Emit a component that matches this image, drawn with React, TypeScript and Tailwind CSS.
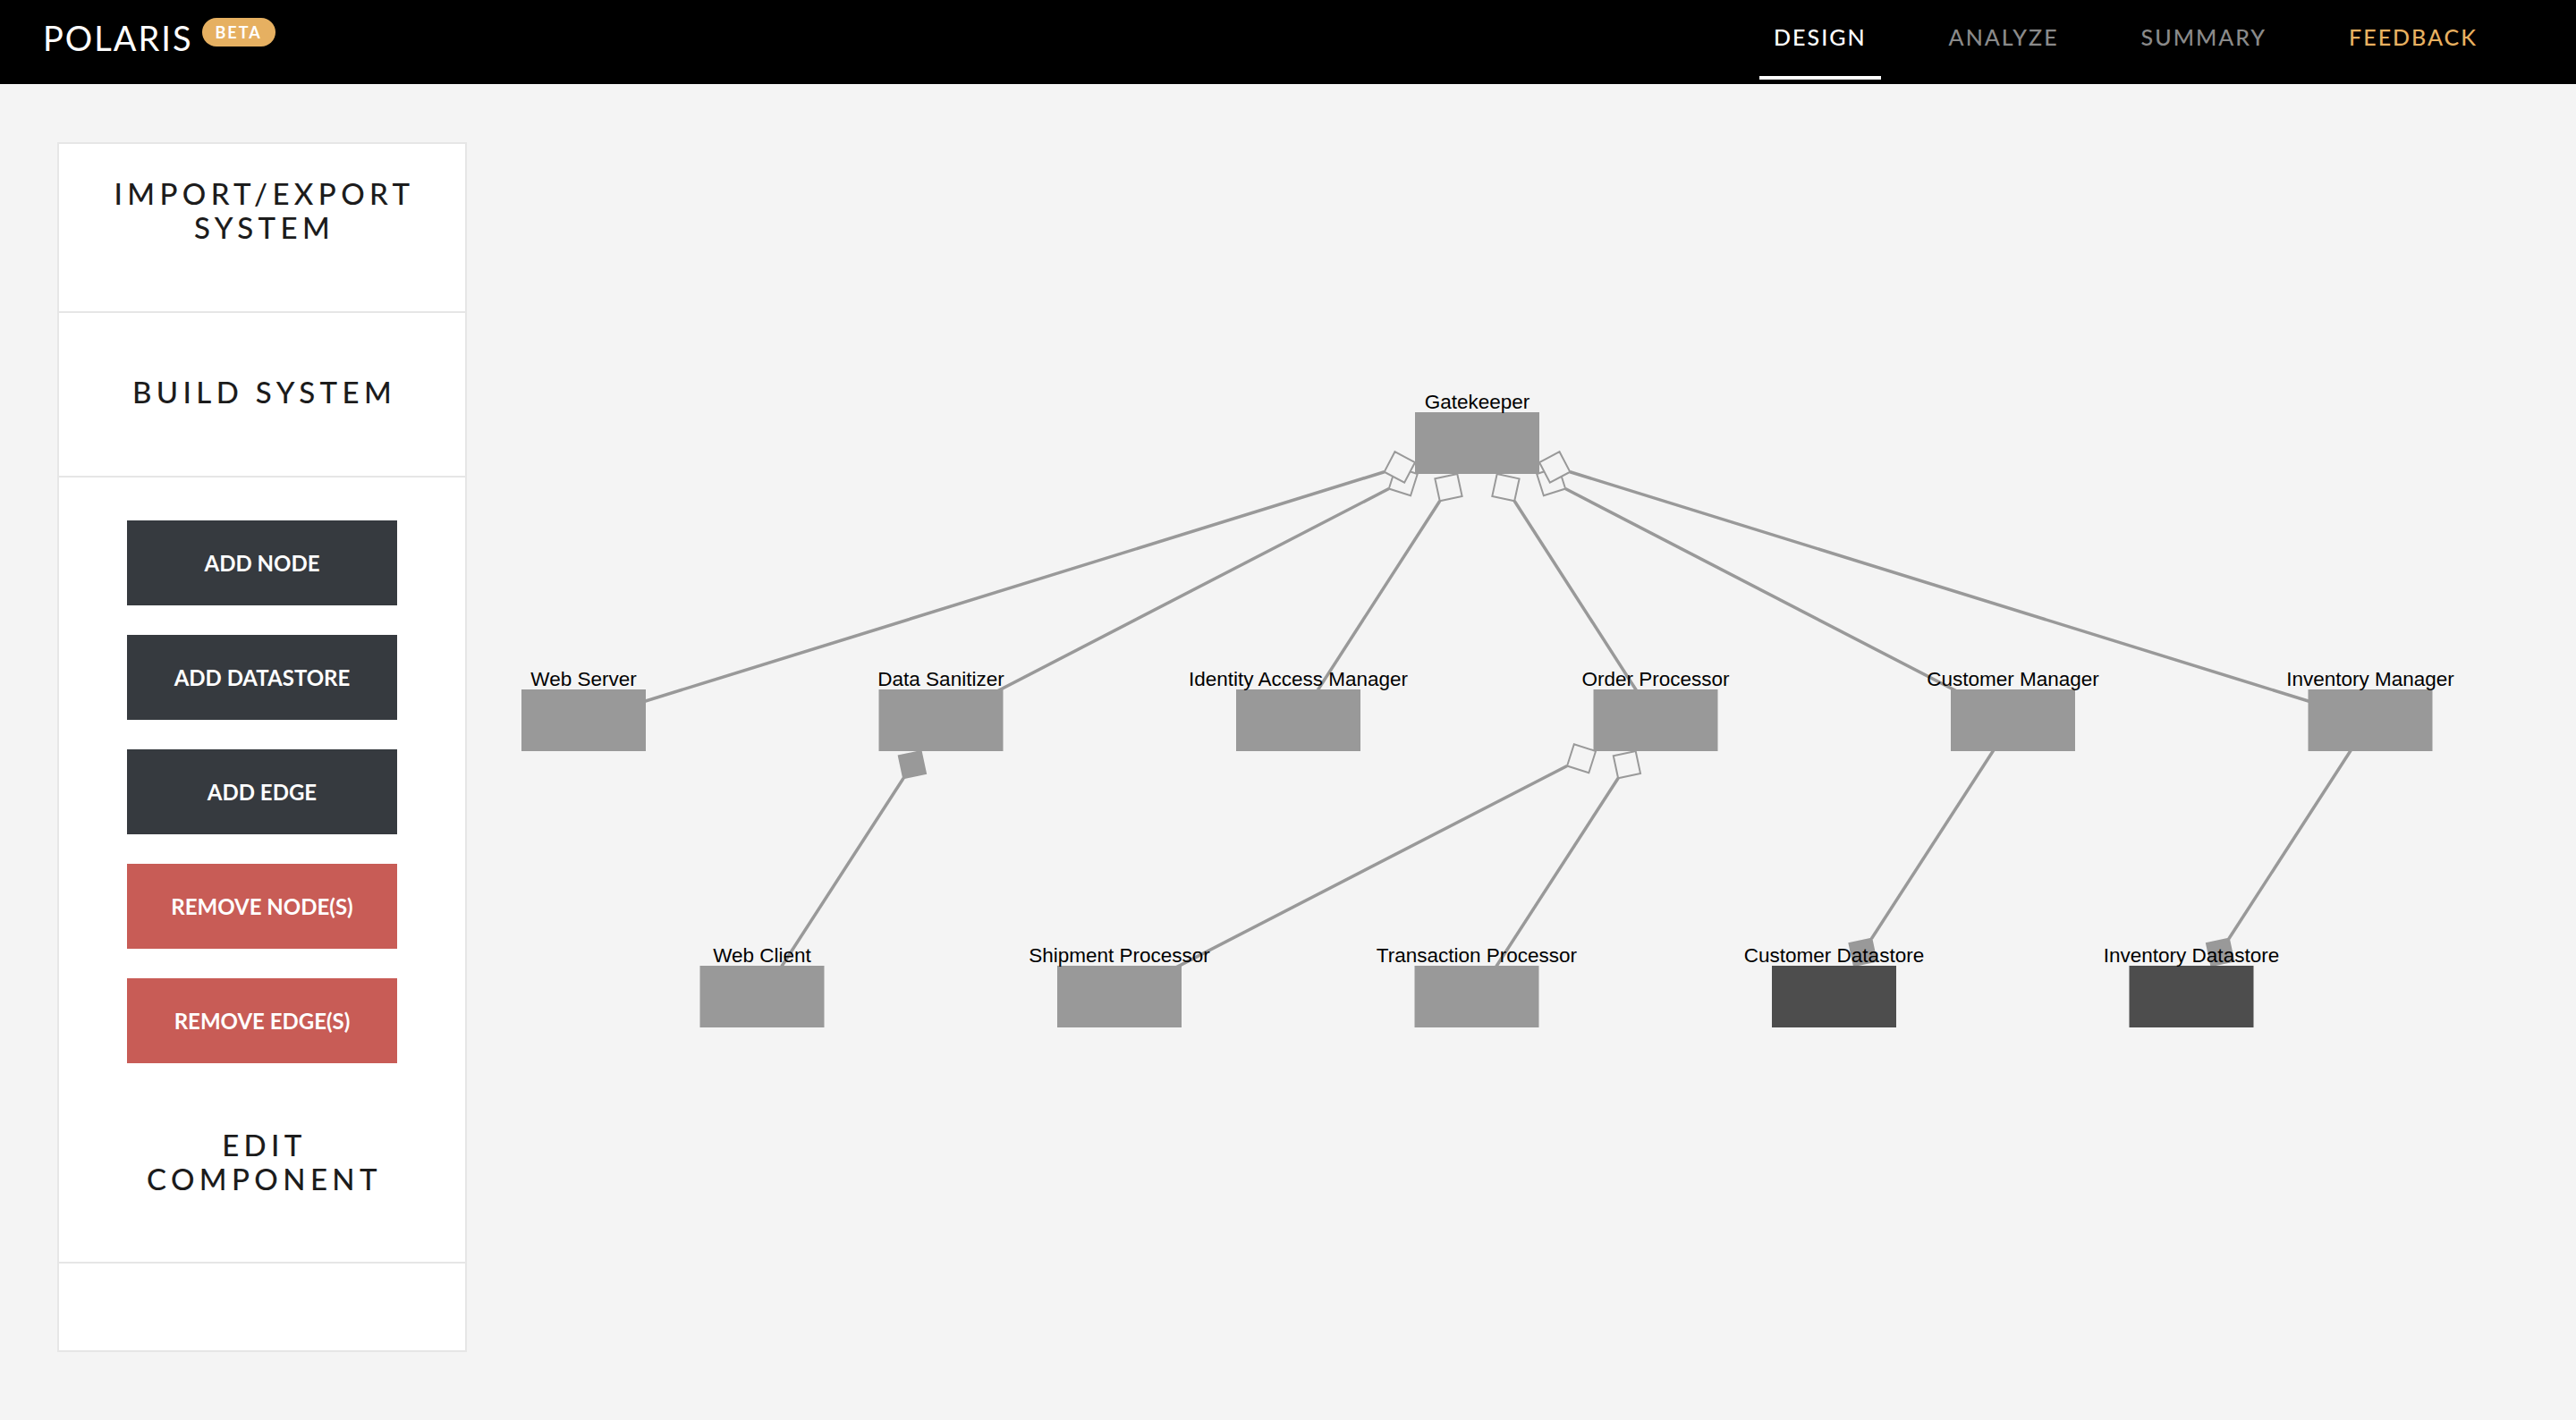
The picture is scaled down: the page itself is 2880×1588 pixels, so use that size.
type GNode = { id: string; label: string; x: number; y: number; store?: boolean };

// node size on the canvas, in px
const NW = 139;
const NH = 69;

const nodes: GNode[] = [
  { id: 'gk', label: 'Gatekeeper', x: 1022, y: 367 },
  { id: 'ws', label: 'Web Server', x: 23, y: 677 },
  { id: 'ds', label: 'Data Sanitizer', x: 422.5, y: 677 },
  { id: 'iam', label: 'Identity Access Manager', x: 822, y: 677 },
  { id: 'op', label: 'Order Processor', x: 1221.5, y: 677 },
  { id: 'cm', label: 'Customer Manager', x: 1621, y: 677 },
  { id: 'im', label: 'Inventory Manager', x: 2020.5, y: 677 },
  { id: 'wc', label: 'Web Client', x: 222.5, y: 986 },
  { id: 'sp', label: 'Shipment Processor', x: 622, y: 986 },
  { id: 'tp', label: 'Transaction Processor', x: 1021.5, y: 986 },
  { id: 'cd', label: 'Customer Datastore', x: 1421, y: 986, store: true },
  { id: 'id', label: 'Inventory Datastore', x: 1820.5, y: 986, store: true },
];

// [node that carries the diamond, other node, filled diamond]
const edges: [string, string, boolean][] = [
  ['gk', 'ds', false],
  ['gk', 'ws', false],
  ['gk', 'iam', false],
  ['gk', 'op', false],
  ['gk', 'cm', false],
  ['gk', 'im', false],
  ['ds', 'wc', true],
  ['op', 'sp', false],
  ['op', 'tp', false],
  ['cd', 'cm', true],
  ['id', 'im', true],
];

const byId = Object.fromEntries(nodes.map((n) => [n.id, n]));

function Edge({ from, to, filled }: { from: string; to: string; filled: boolean }) {
  const a = byId[from];
  const b = byId[to];
  const ax = a.x + NW / 2;
  const ay = a.y + NH / 2;
  const bx = b.x + NW / 2;
  const by = b.y + NH / 2;
  const len = Math.hypot(bx - ax, by - ay);
  const ux = (bx - ax) / len;
  const uy = (by - ay) / len;
  const t = Math.min(NW / 2 / Math.abs(ux), NH / 2 / Math.abs(uy));
  const tx = ax + ux * t;
  const ty = ay + uy * t;
  const L = 36;
  const D = 18;
  const mx = tx + (ux * L) / 2;
  const my = ty + (uy * L) / 2;
  const ex = tx + ux * L;
  const ey = ty + uy * L;
  const pts = `${tx},${ty} ${mx - uy * D},${my + ux * D} ${ex},${ey} ${mx + uy * D},${my - ux * D}`;
  return (
    <g>
      <line x1={bx} y1={by} x2={ex} y2={ey} stroke="#999999" strokeWidth={3.5} />
      <polygon
        points={pts}
        fill={filled ? '#999999' : '#f4f4f4'}
        stroke="#999999"
        strokeWidth={2}
        strokeLinejoin="miter"
      />
    </g>
  );
}

function Diagram() {
  return (
    <svg width={2320} height={1494} className="block">
      {edges.map(([f, t, filled]) => (
        <Edge key={f + t} from={f} to={t} filled={filled} />
      ))}
      {nodes.map((n) => (
        <rect key={n.id} x={n.x} y={n.y} width={NW} height={NH} fill={n.store ? '#4d4d4d' : '#999999'} />
      ))}
      {nodes.map((n) => (
        <text
          key={n.id + '-l'}
          x={n.x + NW / 2}
          y={n.y - 4}
          textAnchor="middle"
          fontSize={22.5}
          fill="#000"
          style={{ fontFamily: '"Liberation Sans", Arial, sans-serif' }}
        >
          {n.label}
        </text>
      ))}
    </svg>
  );
}

const navItems = [
  { label: 'DESIGN', cls: 'text-white', active: true },
  { label: 'ANALYZE', cls: 'text-[#8a8a8a]' },
  { label: 'SUMMARY', cls: 'text-[#8a8a8a]' },
  { label: 'FEEDBACK', cls: 'text-[#e8b160]' },
];

function Header() {
  return (
    <header className="flex h-[94px] shrink-0 bg-black font-['Lato',sans-serif]">
      <div className="flex items-start pl-[48px] pt-[20px]">
        <span className="mt-[3px] text-[38px] leading-none tracking-[2px] text-white">POLARIS</span>
        <span className="ml-[10px] flex h-[32px] w-[82px] items-center justify-center rounded-full bg-[#e6b061] text-[18px] font-bold tracking-[2px] text-white">
          BETA
        </span>
      </div>
      <nav className="ml-auto flex h-full gap-[60px] pr-[94px]">
        {navItems.map((it) => (
          <a
            key={it.label}
            className={`relative flex h-full items-center px-4 pb-[10px] text-[25px] font-medium tracking-[2px] ${it.cls}`}
          >
            {it.label}
            {it.active && <span className="absolute bottom-[5px] left-0 right-0 h-[4px] bg-white" />}
          </a>
        ))}
      </nav>
    </header>
  );
}

const buttons = [
  { label: 'ADD NODE', danger: false },
  { label: 'ADD DATASTORE', danger: false },
  { label: 'ADD EDGE', danger: false },
  { label: 'REMOVE NODE(S)', danger: true },
  { label: 'REMOVE EDGE(S)', danger: true },
];

const titleCls =
  "text-center text-[33px] font-medium leading-[38px] tracking-[5.4px] pl-[5px] text-[#1c1c1c] font-['Lato',sans-serif]";

function Sidebar() {
  return (
    <aside className="flex w-[458px] flex-col border-2 border-[#e6e6e6] bg-white">
      <div className="h-[189px] border-b-2 border-[#e6e6e6] pt-[36px]">
        <h2 className={titleCls}>
          IMPORT/EXPORT
          <br />
          SYSTEM
        </h2>
      </div>
      <div className="flex h-[184px] items-center justify-center border-b-2 border-[#e6e6e6] pb-[7px]">
        <h2 className={titleCls}>BUILD SYSTEM</h2>
      </div>
      <div className="flex h-[689px] flex-col items-center gap-[33px] pt-[48px]">
        {buttons.map((b) => (
          <button
            key={b.label}
            className={`flex h-[95px] w-[302px] shrink-0 items-center justify-center text-[24px] font-bold text-white font-['Lato',sans-serif] ${
              b.danger ? 'bg-[#c85c56]' : 'bg-[#363a3f]'
            }`}
          >
            {b.label}
          </button>
        ))}
      </div>
      <div className="h-[190px] border-b-2 border-[#e6e6e6] pt-[38px]">
        <h2 className={titleCls}>
          EDIT
          <br />
          COMPONENT
        </h2>
      </div>
      <div className="h-[97px]" />
    </aside>
  );
}

export default function App() {
  return (
    <div className="flex h-[1588px] w-[2880px] flex-col overflow-hidden bg-[#f4f4f4]">
      <Header />
      <main className="flex flex-1">
        <div className="shrink-0 pl-[64px] pr-[38px] pt-[65px]">
          <Sidebar />
        </div>
        <div className="relative flex-1">
          <Diagram />
        </div>
      </main>
    </div>
  );
}
